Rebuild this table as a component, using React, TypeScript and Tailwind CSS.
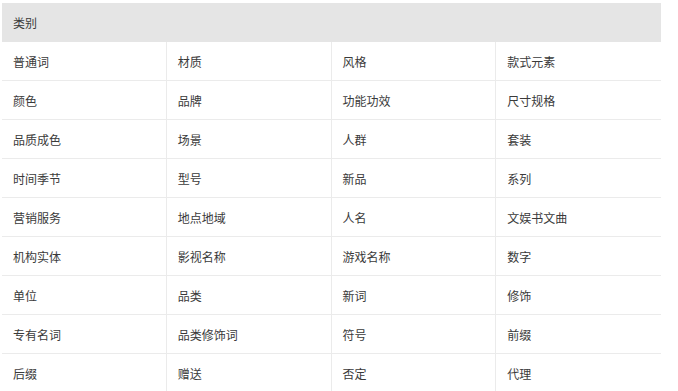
const rows: string[][] = [
  ["普通词", "材质", "风格", "款式元素"],
  ["颜色", "品牌", "功能功效", "尺寸规格"],
  ["品质成色", "场景", "人群", "套装"],
  ["时间季节", "型号", "新品", "系列"],
  ["营销服务", "地点地域", "人名", "文娱书文曲"],
  ["机构实体", "影视名称", "游戏名称", "数字"],
  ["单位", "品类", "新词", "修饰"],
  ["专有名词", "品类修饰词", "符号", "前缀"],
  ["后缀", "赠送", "否定", "代理"],
];

export default function App() {
  return (
    <div
      className="bg-white w-[678px] h-[391px] overflow-hidden pt-[3px] pl-[2px] text-[12px] text-[#3a3a3a]"
      style={{ fontFamily: '"Microsoft YaHei", "Noto Sans CJK SC", sans-serif' }}
    >
      <div className="w-[659px]">
        <div className="h-[39px] bg-[#e5e5e5] flex items-center px-[11px] pt-[1px]">类别</div>
        {rows.map((row, i) => (
          <div key={i} className="grid grid-cols-4 h-[39px] border-b border-[#ebebeb]">
            {row.map((cell, j) => (
              <div
                key={j}
                className={
                  "flex items-center px-[11px] pt-[2px] " + (j < 3 ? "border-r border-[#ebebeb]" : "")
                }
              >
                {cell}
              </div>
            ))}
          </div>
        ))}
      </div>
    </div>
  );
}
